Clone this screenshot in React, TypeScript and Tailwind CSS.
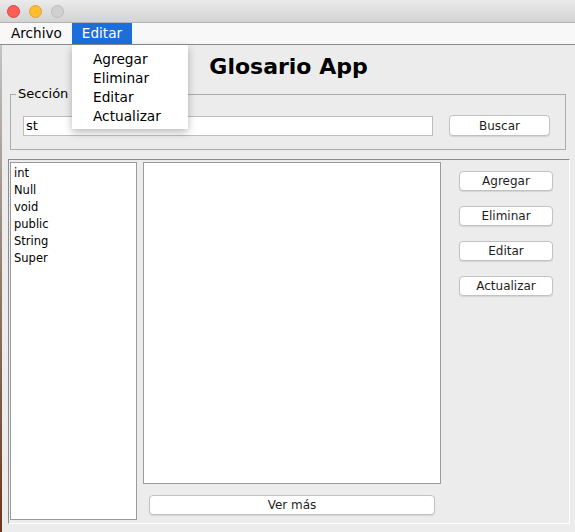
const menus = ["Archivo", "Editar"];
const editItems = ["Agregar", "Eliminar", "Editar", "Actualizar"];
const terms = ["int", "Null", "void", "public", "String", "Super"];
const actions = ["Agregar", "Eliminar", "Editar", "Actualizar"];

function AquaButton({ label, className = "" }: { label: string; className?: string }) {
  return (
    <button
      type="button"
      className={
        "flex h-[20px] items-center justify-center rounded-[4px] border border-[#c2c2c2] bg-white text-[12px] leading-none text-[#1e1e1e] shadow-[0_1px_1px_rgba(0,0,0,0.10)] " +
        className
      }
    >
      {label}
    </button>
  );
}

export default function App() {
  return (
    <div className="relative flex h-[532px] w-[575px] flex-col overflow-hidden bg-[#ececec] font-['DejaVu_Sans',sans-serif] text-black">
      {/* title bar */}
      <div className="flex h-[23px] shrink-0 items-center gap-[9px] border-b border-[#b3b3b3] bg-gradient-to-b from-[#ebebeb] to-[#d3d3d3] pl-[7px]">
        <span className="h-[13px] w-[13px] rounded-full border border-[#e0443e] bg-[#fd5f57]" />
        <span className="h-[13px] w-[13px] rounded-full border border-[#dea236] bg-[#febc2e]" />
        <span className="h-[13px] w-[13px] rounded-full border border-[#bdbdbd] bg-[#d0d0d0]" />
      </div>

      {/* menu bar */}
      <div className="flex h-[22px] shrink-0 items-stretch border-b border-[#8d8d8d] bg-[#f8f8f8] pl-[1px] text-[13.6px]">
        {menus.map((m) => (
          <div
            key={m}
            className={
              m === "Editar"
                ? "flex items-center bg-[#1b6fdc] px-[10px] text-white"
                : "flex items-center px-[10px]"
            }
          >
            {m}
          </div>
        ))}
      </div>

      <div className="flex flex-1">
        <div className="w-[2px] bg-gradient-to-b from-[#c4c4c4] via-[#8f7a68] to-[#6b3517]" />
        <div className="flex flex-1 flex-col">
          <h1 className="pt-[8px] text-center text-[22px] font-bold leading-[28px]">Glosario App</h1>

          <fieldset className="ml-[8px] mr-[9px] mt-[5px] border border-[#acacac] px-[12px] pb-[13px]">
            <legend className="-ml-[7px] px-[2px] text-[13px] leading-[16px]">Sección de búsqueda</legend>
            <div className="mt-[13px] flex items-center">
              <div className="flex h-[20px] w-[410px] items-center border border-[#bdbdbd] bg-white pl-[2px] text-[13px]">
                st
              </div>
              <AquaButton label="Buscar" className="ml-[16px] h-[21px] w-[101px]" />
            </div>
          </fieldset>

          <div className="ml-[6px] mr-[5px] mt-[9px] flex h-[365px] border-b border-l border-r border-t border-b-white border-l-[#8c8c8c] border-r-white border-t-[#8c8c8c] pl-[1px] pt-[2px]">
            <div className="h-[358px] w-[127px] border border-[#9b9b9b] bg-white pl-[3px] pt-[2px] text-[11.5px] leading-[17px]">
              {terms.map((t) => (
                <div key={t}>{t}</div>
              ))}
            </div>
            <div className="ml-[6px] flex w-[298px] flex-col">
              <div className="h-[322px] border border-[#9b9b9b] bg-white" />
              <AquaButton label="Ver más" className="ml-[6px] mt-[11px] w-[286px]" />
            </div>
            <div className="ml-[18px] flex w-[94px] flex-col gap-[15px] pt-[9px]">
              {actions.map((a) => (
                <AquaButton key={a} label={a} className="w-[94px]" />
              ))}
            </div>
          </div>
        </div>
      </div>

      {/* open Editar menu */}
      <div className="absolute left-[72px] top-[45px] w-[116px] bg-white pb-[3px] pt-[5px] text-[13.7px] leading-[19px] shadow-[0_3px_8px_rgba(0,0,0,0.28)]">
        {editItems.map((i) => (
          <div key={i} className="pl-[21px]">
            {i}
          </div>
        ))}
      </div>
    </div>
  );
}
